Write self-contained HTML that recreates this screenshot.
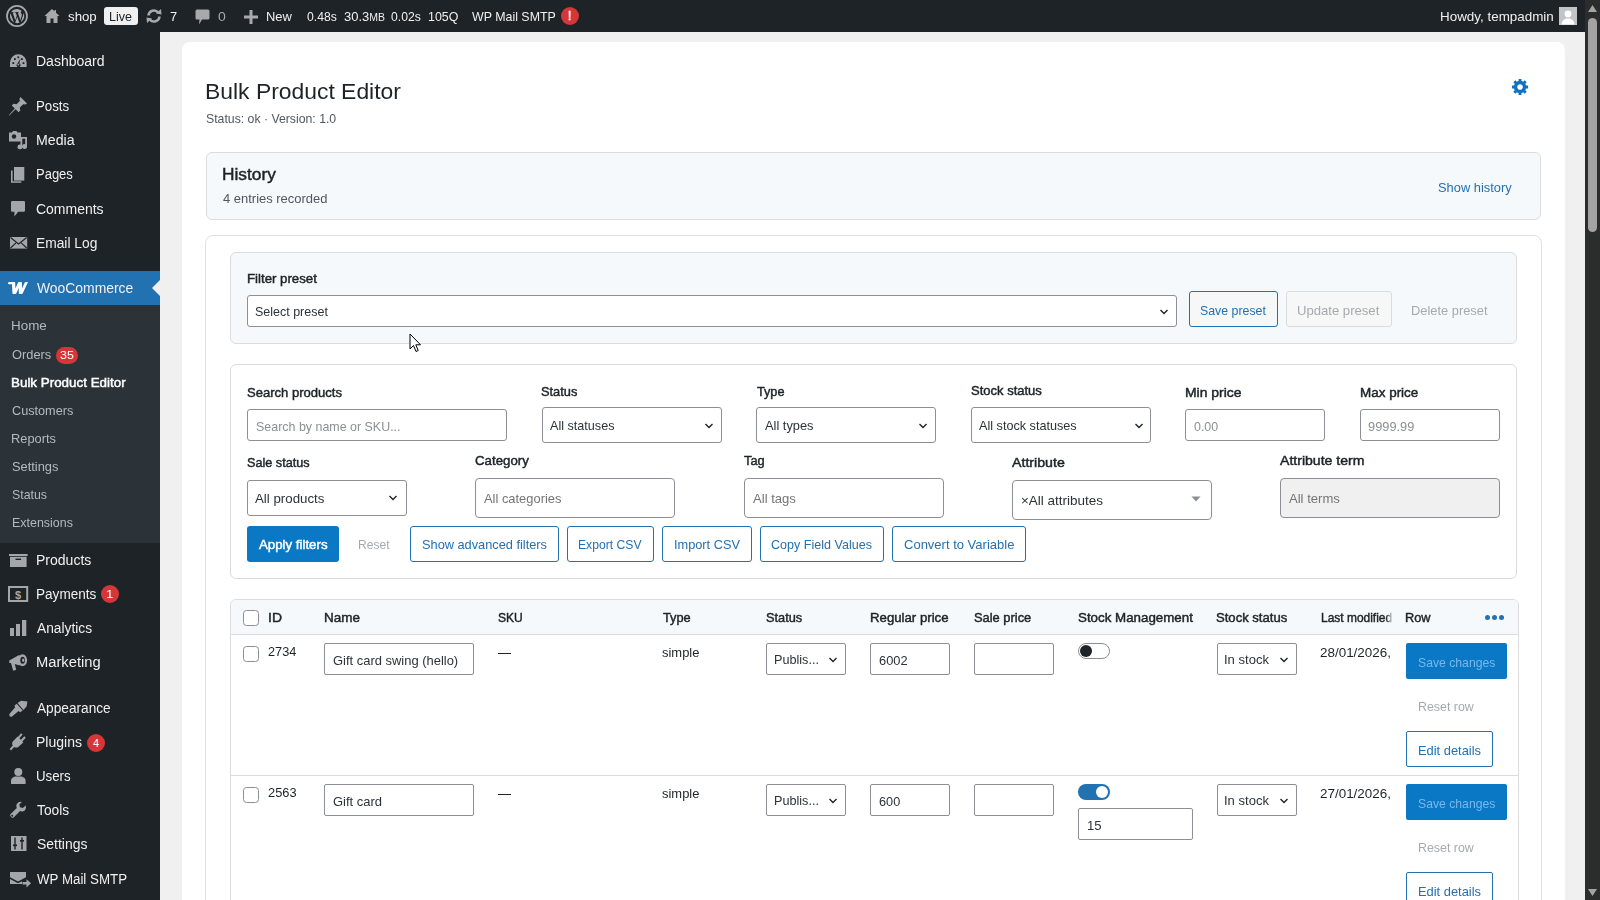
<!DOCTYPE html>
<html><head><meta charset="utf-8"><title>Bulk Product Editor</title>
<style>
html,body{margin:0;padding:0;width:1600px;height:900px;overflow:hidden;background:#f0f0f1;}
body{position:relative;font-family:"Liberation Sans",sans-serif;}
.t{position:absolute;white-space:nowrap;line-height:1;transform-origin:0 0;}
</style></head><body>
<div style="position:absolute;left:160px;top:32px;width:1425px;height:868px;background:#f0f0f1;border-radius:0px;box-sizing:border-box;"></div>
<div style="position:absolute;left:182px;top:42px;width:1383px;height:918px;background:#ffffff;border-radius:8px;box-sizing:border-box;"></div>
<div style="position:absolute;left:0px;top:0px;width:1585px;height:32px;background:#1d2327;border-radius:0px;box-sizing:border-box;"></div>
<svg style="position:absolute;left:6px;top:5px" width="22" height="22" viewBox="0 0 20 20"><circle cx="10" cy="10" r="9.1" fill="none" stroke="#a7aaad" stroke-width="1.6"/><path fill="#a7aaad" d="M3.6 10c0 2.5 1.5 4.7 3.6 5.8L4.1 7.4C3.8 8.2 3.6 9.1 3.6 10zm10.9-.3c0-.8-.3-1.3-.5-1.7-.3-.5-.6-.9-.6-1.4 0-.5.4-1 1-1h.1C13.3 4.5 11.8 3.6 10 3.6c-2.2 0-4.2 1.1-5.3 2.9h.4c.7 0 1.7-.1 1.7-.1.3 0 .4.5 0 .5 0 0-.3 0-.7.1l2.3 6.9 1.4-4.2-1-2.7c-.3 0-.7-.1-.7-.1-.3 0-.3-.5 0-.5 0 0 1.1.1 1.7.1.7 0 1.7-.1 1.7-.1.3 0 .4.5 0 .5 0 0-.3 0-.7.1l2.3 6.8.6-2.1c.4-1 .6-1.7.6-2.3zm-4.3.9l-1.9 5.6c.6.2 1.2.3 1.8.3.7 0 1.4-.1 2.1-.4l-2-5.5zm5.5-3.6c0 .2.1.4.1.7 0 .6-.1 1.4-.5 2.3l-1.9 5.6c1.9-1.1 3.2-3.2 3.2-5.6 0-1.1-.3-2.1-.9-3z"/></svg>
<svg style="position:absolute;left:44px;top:8px" width="16" height="16" viewBox="0 0 16 16"><path fill="#a7aaad" d="M8 1 L0.5 8 L2.5 8 L2.5 15 L6.5 15 L6.5 10.5 L9.5 10.5 L9.5 15 L13.5 15 L13.5 8 L15.5 8 L12 4.7 L12 2 L10.5 2 L10.5 3.3 Z"/></svg>
<div id="t1" class="t" style="left:67.79288025889967px;top:9.99px;font-size:13px;color:#f0f0f1;font-weight:400;transform:scaleX(1.0197);">shop</div>
<div style="position:absolute;left:104px;top:7px;width:34px;height:18px;background:#f0f0f1;border-radius:3px;box-sizing:border-box;"></div>
<div id="t2" class="t" style="left:109.02105862265225px;top:9.99px;font-size:13px;color:#1d2327;font-weight:400;transform:scaleX(0.9639);">Live</div>
<svg style="position:absolute;left:145px;top:8px" width="18" height="16" viewBox="0 0 18 16"><path fill="none" stroke="#a7aaad" stroke-width="2.6" d="M3.5 7.5 A5.5 5.5 0 0 1 13.2 4.5 M14.5 8.5 A5.5 5.5 0 0 1 4.8 11.5"/><path fill="#a7aaad" d="M11 5.5 L16.5 6.5 L16 1 Z M7 10.5 L1.5 9.5 L2 15 Z"/></svg>
<div id="t3" class="t" style="left:170.4px;top:9.99px;font-size:13px;color:#f0f0f1;font-weight:400;transform:scaleX(0.9846);">7</div>
<svg style="position:absolute;left:195px;top:9px" width="15" height="16" viewBox="0 0 15 16"><path fill="#a7aaad" d="M2 0.5 H13 A1.5 1.5 0 0 1 14.5 2 V9 A1.5 1.5 0 0 1 13 10.5 H7 L4 15.5 L4.5 10.5 H2 A1.5 1.5 0 0 1 0.5 9 V2 A1.5 1.5 0 0 1 2 0.5Z"/></svg>
<div id="t4" class="t" style="left:217.5625px;top:9.99px;font-size:13px;color:#a7aaad;font-weight:400;transform:scaleX(1.0769);">0</div>
<svg style="position:absolute;left:244px;top:10px" width="14" height="14" viewBox="0 0 14 14"><path fill="#a7aaad" d="M5.5 0 H8.5 V5.5 H14 V8.5 H8.5 V14 H5.5 V8.5 H0 V5.5 H5.5Z"/></svg>
<div id="t5" class="t" style="left:265.9904088844018px;top:9.99px;font-size:13px;color:#f0f0f1;font-weight:400;transform:scaleX(0.9941);">New</div>
<div id="t6" class="t" style="left:307.1198279393691px;top:9.99px;font-size:13px;color:#f0f0f1;font-weight:400;transform:scaleX(0.9358);">0.48s</div>
<div id="t7" class="t" style="left:343.5007898894155px;top:9.99px;font-size:13px;color:#f0f0f1;font-weight:400;transform:scaleX(0.9984);">30.3<span style="font-size:10.5px">MB</span></div>
<div id="t8" class="t" style="left:390.6198279393691px;top:9.99px;font-size:13px;color:#f0f0f1;font-weight:400;transform:scaleX(0.9358);">0.02s</div>
<div id="t9" class="t" style="left:427.72553724181097px;top:9.99px;font-size:13px;color:#f0f0f1;font-weight:400;transform:scaleX(0.9532);">105Q</div>
<div id="t10" class="t" style="left:472.0px;top:9.99px;font-size:13px;color:#f0f0f1;font-weight:400;transform:scaleX(0.9536);">WP Mail SMTP</div>
<div style="position:absolute;left:561px;top:7px;width:18px;height:18px;background:#d63638;border-radius:9px;box-sizing:border-box;"></div>
<div id="t11" class="t" style="left:568px;top:10.34px;font-size:12px;color:#ffffff;font-weight:400;-webkit-text-stroke:0.45px #ffffff;">!</div>
<div id="t12" class="t" style="left:1439.9521693369197px;top:9.99px;font-size:13px;color:#f0f0f1;font-weight:400;transform:scaleX(1.0317);">Howdy, tempadmin</div>
<div style="position:absolute;left:1559px;top:7px;width:18px;height:18px;background:#c3c4c7;border-radius:0px;box-sizing:border-box;"></div>
<svg style="position:absolute;left:1559px;top:7px" width="18" height="18" viewBox="0 0 18 18"><circle cx="9" cy="7" r="3.4" fill="#fff"/><path fill="#fff" d="M2.5 17.5 C3 13 6 11.5 9 11.5 C12 11.5 15 13 15.5 17.5Z"/></svg>
<div style="position:absolute;left:0px;top:32px;width:160px;height:868px;background:#1d2327;border-radius:0px;box-sizing:border-box;"></div>
<div style="position:absolute;left:0px;top:271px;width:160px;height:34px;background:#2271b1;border-radius:0px;box-sizing:border-box;"></div>
<div style="position:absolute;left:0px;top:305px;width:160px;height:238px;background:#2c3338;border-radius:0px;box-sizing:border-box;"></div>
<svg style="position:absolute;left:152px;top:280px" width="8" height="16" viewBox="0 0 8 16"><path fill="#f0f0f1" d="M8 0 L0 8 L8 16Z"/></svg>
<svg style="position:absolute;left:9px;top:53px" width="19" height="15" viewBox="0 0 19 15"><path fill="#a3a7ab" d="M1 14 V9.5 A8.3 8.3 0 0 1 17.6 9.5 V14 Z"/><rect x="3.4" y="9.2" width="1.8" height="1.8" fill="#1d2327"/><rect x="5" y="5.2" width="1.8" height="1.8" fill="#1d2327"/><rect x="8.4" y="3.4" width="1.8" height="1.8" fill="#1d2327"/><rect x="12" y="5.2" width="1.8" height="1.8" fill="#1d2327"/><rect x="13.6" y="9.2" width="1.8" height="1.8" fill="#1d2327"/><path fill="#1d2327" d="M11.6 5.5 L10.3 10.5 A1.9 1.9 0 1 1 8.3 10.8 Z"/><circle cx="9.3" cy="11.6" r="0.9" fill="#a3a7ab"/></svg>
<svg style="position:absolute;left:8px;top:96px" width="20" height="20" viewBox="0 0 20 20"><path fill="#a3a7ab" d="M12.5 1 L19 7.5 L17.3 8.6 L15.2 8.2 L11.8 11.6 L12.3 14.6 L10.6 16.3 L7.6 13.3 L1.3 19.6 L0.8 19.2 L6.8 12.5 L3.8 9.5 L5.5 7.8 L8.5 8.3 L11.9 4.9 L11.5 2.8 Z"/></svg>
<svg style="position:absolute;left:8px;top:130px" width="20" height="20" viewBox="0 0 20 20"><path fill="#a3a7ab" d="M1 2.5 H4 L5 1 H8.5 L9.5 2.5 H13 V11.5 H1 Z"/><circle cx="6" cy="6.5" r="2.2" fill="#1d2327"/><path fill="#a3a7ab" d="M12.5 7 H19 V16.3 A2.4 2.4 0 1 1 17.2 14.2 V8.8 H14.3 V16.8 A2.4 2.4 0 1 1 12.5 14.6 Z"/></svg>
<svg style="position:absolute;left:10px;top:166px" width="16" height="18" viewBox="0 0 16 18"><rect x="4" y="1" width="10.3" height="13.6" fill="#a3a7ab"/><path fill="#a3a7ab" d="M1 4.5 H2.6 V15.2 H11.3 V16.8 H1 Z"/></svg>
<svg style="position:absolute;left:10px;top:200px" width="16" height="18" viewBox="0 0 16 18"><path fill="#a3a7ab" d="M2.2 1 H13.8 A1.2 1.2 0 0 1 15 2.2 V10.5 A1.2 1.2 0 0 1 13.8 11.7 H8.2 L4.4 16.5 V11.7 H2.2 A1.2 1.2 0 0 1 1 10.5 V2.2 A1.2 1.2 0 0 1 2.2 1Z"/></svg>
<svg style="position:absolute;left:9px;top:236px" width="20" height="14" viewBox="0 0 20 14"><rect x="1" y="1" width="17.2" height="11.6" fill="#a3a7ab"/><path fill="none" stroke="#1d2327" stroke-width="1.1" d="M1.5 1.5 L9.6 8 L17.7 1.5 M1.5 12 L7 6.8 M17.7 12 L12.2 6.8"/></svg>
<svg style="position:absolute;left:7px;top:281px" width="22" height="14" viewBox="0 0 22 14"><path fill="#ffffff" d="M1 2.2 C1 1.2 1.8 1 3.5 1 H7 C8 1 8.2 1.5 8.2 2.4 L8.4 7.5 L10.6 2.5 C11 1.4 11.6 1 12.6 1 H14 C14.8 1 15 1.6 15 2.4 V7.5 L17.5 2 C17.9 1.2 18.5 1 19.6 1 H21 L16 11.8 C15.6 12.7 15 13 14.2 13 H13 C12.2 13 11.8 12.5 11.8 11.5 V7 L9.5 12 C9.1 12.8 8.6 13 7.8 13 H6.6 C5.8 13 5.4 12.5 5.4 11.7 L5 3.2 H2.6 C1.6 3.2 1 2.9 1 2.2Z"/></svg>
<svg style="position:absolute;left:8px;top:553px" width="20" height="16" viewBox="0 0 20 16"><rect x="1" y="1" width="18.6" height="2" fill="#a3a7ab"/><path fill="#a3a7ab" d="M2 3.8 H18.6 V14 H2 Z"/><rect x="7.5" y="5.6" width="5.6" height="1.4" fill="#1d2327"/></svg>
<svg style="position:absolute;left:7px;top:585px" width="22" height="18" viewBox="0 0 22 18"><rect x="2" y="2" width="18.2" height="14" fill="none" stroke="#a3a7ab" stroke-width="2"/><text x="11.1" y="13.6" font-family="Liberation Sans" font-weight="700" font-size="11" fill="#a3a7ab" text-anchor="middle">$</text></svg>
<svg style="position:absolute;left:9px;top:619px" width="18" height="18" viewBox="0 0 18 18"><rect x="1" y="9" width="4" height="8" fill="#a3a7ab"/><rect x="7" y="5" width="4" height="12" fill="#a3a7ab"/><rect x="13" y="1" width="4.3" height="16" fill="#a3a7ab"/></svg>
<svg style="position:absolute;left:8px;top:652px" width="20" height="20" viewBox="0 0 20 20"><path fill="#a3a7ab" d="M1.3 8.5 L11.5 2.8 V13.5 L6.8 12 L8.2 17.8 L5.2 18.8 L3 11 H1.3 Z"/><ellipse cx="14.5" cy="8.2" rx="4.6" ry="6" fill="#a3a7ab"/><ellipse cx="14.6" cy="8.2" rx="2.3" ry="3.5" fill="#1d2327"/><ellipse cx="15.2" cy="8.2" rx="1.1" ry="1.8" fill="#a3a7ab"/></svg>
<svg style="position:absolute;left:8px;top:700px" width="20" height="18" viewBox="0 0 20 18"><path fill="#a3a7ab" d="M9.5 3 L13 0.8 L19.5 1.5 L18.5 6.5 L15.5 10 Z"/><path fill="#a3a7ab" d="M8.7 3.8 L14.7 10.6 L12.2 12.2 L10.6 11 L4 16.6 A2 2 0 0 1 1.4 14 L7 7.4 L6.6 5.6 Z"/></svg>
<svg style="position:absolute;left:9px;top:732px" width="18" height="19" viewBox="0 0 18 19"><path fill="#a3a7ab" d="M12 1.2 L13.6 2.6 L10.4 6.3 L12 7.8 L15.3 4.2 L16.8 5.7 L13.4 9.4 L14.3 10.5 L9 15.2 C7.6 15.8 6.3 15.7 5.2 15 L2 18.4 L0.6 17 L3.8 13.6 C3 12.4 3 11 3.6 9.7 L8.6 4.6 L9 5 Z"/></svg>
<svg style="position:absolute;left:10px;top:767px" width="17" height="18" viewBox="0 0 17 18"><circle cx="8.3" cy="5" r="4" fill="#a3a7ab"/><path fill="#a3a7ab" d="M1 17 V14 C1 11.3 3.5 9.6 6 9.6 H10.6 C13.1 9.6 15.6 11.3 15.6 14 V17 Z"/></svg>
<svg style="position:absolute;left:9px;top:801px" width="18" height="18" viewBox="0 0 18 18"><path fill="#a3a7ab" d="M16.6 4.6 L13.8 7 L11 6.3 L10.3 3.5 L12.8 0.9 C10.6 0.3 8.3 1.4 7.6 3.6 C7.2 4.7 7.3 5.9 7.8 6.9 L1.7 13 C1 13.7 1 14.9 1.7 15.6 L2.3 16.2 C3 16.9 4.2 16.9 4.9 16.2 L11 10.1 C12 10.6 13.2 10.7 14.3 10.3 C16.5 9.6 17.6 7.2 16.6 4.6 Z"/><circle cx="3.2" cy="14.7" r="1" fill="#1d2327"/></svg>
<svg style="position:absolute;left:10px;top:835px" width="17" height="17" viewBox="0 0 17 17"><rect x="1" y="1" width="15.5" height="15" fill="#a3a7ab"/><path fill="none" stroke="#1d2327" stroke-width="1.4" d="M5 2.5 V14.5 M12 2.5 V14.5"/><rect x="3" y="9.5" width="4" height="1.6" fill="#1d2327"/><rect x="10" y="5" width="4" height="1.6" fill="#1d2327"/></svg>
<svg style="position:absolute;left:9px;top:871px" width="23" height="18" viewBox="0 0 23 18"><path fill="#a3a7ab" d="M1 1 H17 V6.2 L9 10.5 L1 6.2 Z"/><path fill="#a3a7ab" d="M1 8 L9 12.3 L13 10.2 V13 H1 Z"/><path fill="#a3a7ab" d="M13.5 11 H17.5 V8.2 L22 12.3 L17.5 16.4 V13.6 H13.5 Z"/></svg>
<div id="t13" class="t" style="left:35.904761904761905px;top:54.14px;font-size:14px;color:#f0f0f1;font-weight:400;transform:scaleX(1.0014);">Dashboard</div>
<div id="t14" class="t" style="left:35.9644752960392px;top:98.74px;font-size:14px;color:#f0f0f1;font-weight:400;transform:scaleX(0.9468);">Posts</div>
<div id="t15" class="t" style="left:35.892285030381146px;top:132.74px;font-size:14px;color:#f0f0f1;font-weight:400;transform:scaleX(1.0128);">Media</div>
<div id="t16" class="t" style="left:35.985491671144544px;top:167.34px;font-size:14px;color:#f0f0f1;font-weight:400;transform:scaleX(0.9276);">Pages</div>
<div id="t17" class="t" style="left:36.34462580843856px;top:202.04px;font-size:14px;color:#f0f0f1;font-weight:400;transform:scaleX(0.9987);">Comments</div>
<div id="t18" class="t" style="left:35.92210144927536px;top:235.94px;font-size:14px;color:#f0f0f1;font-weight:400;transform:scaleX(0.9855);">Email Log</div>
<div id="t19" class="t" style="left:37.0px;top:281.14px;font-size:14px;color:#f0f0f1;font-weight:400;transform:scaleX(0.9925);">WooCommerce</div>
<div id="t20" class="t" style="left:35.904555866632734px;top:552.84px;font-size:14px;color:#f0f0f1;font-weight:400;transform:scaleX(1.0015);">Products</div>
<div id="t21" class="t" style="left:35.93897770772349px;top:586.94px;font-size:14px;color:#f0f0f1;font-weight:400;transform:scaleX(0.9701);">Payments</div>
<div id="t22" class="t" style="left:37.0px;top:620.94px;font-size:14px;color:#f0f0f1;font-weight:400;transform:scaleX(0.9823);">Analytics</div>
<div id="t23" class="t" style="left:35.84914534817024px;top:654.64px;font-size:14px;color:#f0f0f1;font-weight:400;transform:scaleX(1.0522);">Marketing</div>
<div id="t24" class="t" style="left:37.0px;top:701.14px;font-size:14px;color:#f0f0f1;font-weight:400;transform:scaleX(0.9755);">Appearance</div>
<div id="t25" class="t" style="left:35.90589866009549px;top:734.84px;font-size:14px;color:#f0f0f1;font-weight:400;transform:scaleX(1.0003);">Plugins</div>
<div id="t26" class="t" style="left:36.17083010085337px;top:768.94px;font-size:14px;color:#f0f0f1;font-weight:400;transform:scaleX(0.9476);">Users</div>
<div id="t27" class="t" style="left:36.78484525080043px;top:802.94px;font-size:14px;color:#f0f0f1;font-weight:400;transform:scaleX(0.9836);">Tools</div>
<div id="t28" class="t" style="left:36.56435643564357px;top:836.94px;font-size:14px;color:#f0f0f1;font-weight:400;transform:scaleX(0.9958);">Settings</div>
<div id="t29" class="t" style="left:37.0px;top:871.94px;font-size:14px;color:#f0f0f1;font-weight:400;transform:scaleX(0.9512);">WP Mail SMTP</div>
<div id="t30" class="t" style="left:11.451724137931034px;top:318.99px;font-size:13px;color:#b4b9be;font-weight:400;transform:scaleX(1.0321);">Home</div>
<div id="t31" class="t" style="left:11.898721101819971px;top:347.79px;font-size:13px;color:#b4b9be;font-weight:400;transform:scaleX(0.9867);">Orders</div>
<div id="t32" class="t" style="left:11.905728364644286px;top:403.79px;font-size:13px;color:#b4b9be;font-weight:400;transform:scaleX(0.9752);">Customers</div>
<div id="t33" class="t" style="left:11.498128688642579px;top:431.79px;font-size:13px;color:#b4b9be;font-weight:400;transform:scaleX(0.9865);">Reports</div>
<div id="t34" class="t" style="left:12.0986798679868px;top:459.79px;font-size:13px;color:#b4b9be;font-weight:400;transform:scaleX(0.9879);">Settings</div>
<div id="t35" class="t" style="left:12.114512152166256px;top:487.79px;font-size:13px;color:#b4b9be;font-weight:400;transform:scaleX(0.9489);">Status</div>
<div id="t36" class="t" style="left:11.527976312027771px;top:515.99px;font-size:13px;color:#b4b9be;font-weight:400;transform:scaleX(0.9571);">Extensions</div>
<div id="t37" class="t" style="left:11.453917050691244px;top:375.79px;font-size:13px;color:#ffffff;font-weight:400;-webkit-text-stroke:0.45px #ffffff;transform:scaleX(1.0300);">Bulk Product Editor</div>
<div style="position:absolute;left:56px;top:346.5px;width:22px;height:17.5px;background:#d63638;border-radius:9px;box-sizing:border-box;"></div>
<div id="t38" class="t" style="left:60.10957297043642px;top:350.18px;font-size:11px;color:#fff;font-weight:400;transform:scaleX(1.1358);">35</div>
<div style="position:absolute;left:101px;top:585px;width:18px;height:18px;background:#d63638;border-radius:9px;box-sizing:border-box;"></div>
<div id="t39" class="t" style="left:106.17241379310344px;top:589.18px;font-size:11px;color:#fff;font-weight:400;transform:scaleX(1.2038);">1</div>
<div style="position:absolute;left:87px;top:734px;width:18px;height:18px;background:#d63638;border-radius:9px;box-sizing:border-box;"></div>
<div id="t40" class="t" style="left:93px;top:737.68px;font-size:11px;color:#fff;font-weight:400;">4</div>
<div id="t41" class="t" style="left:205.21198156682027px;top:80.64px;font-size:22.5px;color:#1d2327;font-weight:400;transform:scaleX(1.0172);">Bulk Product Editor</div>
<div id="t42" class="t" style="left:206.1167930460514px;top:112.39px;font-size:13px;color:#50575e;font-weight:400;transform:scaleX(0.9433);">Status: ok &middot; Version: 1.0</div>
<svg style="position:absolute;left:1511px;top:77px" width="19" height="19" viewBox="0 0 20 20"><path fill="#0f72c0" d="M18 12h-2.18c-.17.7-.44 1.35-.81 1.93l1.54 1.54-2.1 2.1-1.54-1.54c-.58.36-1.23.63-1.91.79V19H8v-2.18c-.68-.16-1.33-.43-1.91-.79l-1.54 1.54-2.12-2.12 1.54-1.54c-.36-.58-.63-1.23-.79-1.91H1V9.03h2.17c.16-.7.44-1.35.8-1.94L2.43 5.55l2.1-2.1 1.54 1.54c.58-.37 1.24-.64 1.93-.81V2h3v2.18c.68.16 1.33.43 1.91.79l1.54-1.54 2.12 2.12-1.54 1.54c.36.59.64 1.24.8 1.94H18V12zm-8.5 1.5c1.66 0 3-1.34 3-3s-1.34-3-3-3-3 1.34-3 3 1.34 3 3 3z"/></svg>
<div style="position:absolute;left:206px;top:152px;width:1335px;height:68px;background:#f6f9fc;border:1px solid #dcdcde;border-radius:6px;box-sizing:border-box;"></div>
<div id="t43" class="t" style="left:222.1477784932389px;top:167.45px;font-size:16px;color:#1d2327;font-weight:400;-webkit-text-stroke:0.45px #1d2327;transform:scaleX(1.0818);">History</div>
<div id="t44" class="t" style="left:222.79755501222493px;top:191.79px;font-size:13px;color:#50575e;font-weight:400;transform:scaleX(0.9967);">4 entries recorded</div>
<div id="t45" class="t" style="left:1438.3479416809605px;top:181.49px;font-size:13px;color:#2271b1;font-weight:400;transform:scaleX(0.9897);">Show history</div>
<div style="position:absolute;left:205px;top:235px;width:1337px;height:725px;background:#ffffff;border:1px solid #e0e0e0;border-radius:8px;box-sizing:border-box;"></div>
<div style="position:absolute;left:230px;top:252px;width:1287px;height:92px;background:#f6f9fc;border:1px solid #dcdcde;border-radius:6px;box-sizing:border-box;"></div>
<div id="t46" class="t" style="left:246.66575663758326px;top:271.79px;font-size:13px;color:#1d2327;font-weight:400;-webkit-text-stroke:0.45px #1d2327;transform:scaleX(1.0183);">Filter preset</div>
<div style="position:absolute;left:247px;top:295px;width:930px;height:32px;background:#ffffff;border:1px solid #8c8f94;border-radius:3px;box-sizing:border-box;"></div>
<div id="t47" class="t" style="left:254.80995292535306px;top:304.89px;font-size:13px;color:#2c3338;font-weight:400;transform:scaleX(0.9601);">Select preset</div>
<svg style="position:absolute;left:1159px;top:307.5px" width="10" height="8" viewBox="0 0 10 8"><path fill="none" stroke="#1d2327" stroke-width="1.4" d="M1.5 2 L5 5.5 L8.5 2"/></svg>
<div style="position:absolute;left:1189px;top:291px;width:89px;height:36px;background:#f6f7f7;border:1px solid #2271b1;border-radius:3px;box-sizing:border-box;"></div>
<div id="t48" class="t" style="left:1200.1144223693893px;top:303.99px;font-size:13px;color:#2271b1;font-weight:400;transform:scaleX(0.9491);">Save preset</div>
<div style="position:absolute;left:1286px;top:291px;width:106px;height:36px;background:#f6f7f7;border:1px solid #dcdcde;border-radius:3px;box-sizing:border-box;"></div>
<div id="t49" class="t" style="left:1297.1814187068424px;top:303.99px;font-size:13px;color:#a7aaad;font-weight:400;transform:scaleX(1.0075);">Update preset</div>
<div id="t50" class="t" style="left:1410.99567675424px;top:303.99px;font-size:13px;color:#a7aaad;font-weight:400;transform:scaleX(0.9889);">Delete preset</div>
<div style="position:absolute;left:230px;top:364px;width:1287px;height:215px;background:#ffffff;border:1px solid #dcdcde;border-radius:6px;box-sizing:border-box;"></div>
<div id="t51" class="t" style="left:246.99223537368957px;top:385.99px;font-size:13px;color:#1d2327;font-weight:400;-webkit-text-stroke:0.45px #1d2327;transform:scaleX(1.0037);">Search products</div>
<div style="position:absolute;left:247px;top:409px;width:260px;height:32px;background:#ffffff;border:1px solid #8c8f94;border-radius:3px;box-sizing:border-box;"></div>
<div id="t52" class="t" style="left:255.61123146850176px;top:419.99px;font-size:13px;color:#8c8f94;font-weight:400;transform:scaleX(0.9570);">Search by name or SKU...</div>
<div id="t53" class="t" style="left:541.3998591053187px;top:384.59px;font-size:13px;color:#1d2327;font-weight:400;-webkit-text-stroke:0.45px #1d2327;transform:scaleX(0.9850);">Status</div>
<div style="position:absolute;left:542px;top:407px;width:180px;height:36px;background:#ffffff;border:1px solid #8c8f94;border-radius:3px;box-sizing:border-box;"></div>
<div id="t54" class="t" style="left:549.8px;top:418.99px;font-size:13px;color:#2c3338;font-weight:400;transform:scaleX(0.9702);">All statuses</div>
<svg style="position:absolute;left:704px;top:421.5px" width="10" height="8" viewBox="0 0 10 8"><path fill="none" stroke="#1d2327" stroke-width="1.4" d="M1.5 2 L5 5.5 L8.5 2"/></svg>
<div id="t55" class="t" style="left:756.702450867052px;top:384.59px;font-size:13px;color:#1d2327;font-weight:400;-webkit-text-stroke:0.45px #1d2327;transform:scaleX(0.9725);">Type</div>
<div style="position:absolute;left:756px;top:407px;width:180px;height:36px;background:#ffffff;border:1px solid #8c8f94;border-radius:3px;box-sizing:border-box;"></div>
<div id="t56" class="t" style="left:764.6px;top:418.99px;font-size:13px;color:#2c3338;font-weight:400;transform:scaleX(0.9872);">All types</div>
<svg style="position:absolute;left:917.5px;top:421.5px" width="10" height="8" viewBox="0 0 10 8"><path fill="none" stroke="#1d2327" stroke-width="1.4" d="M1.5 2 L5 5.5 L8.5 2"/></svg>
<div id="t57" class="t" style="left:970.7937244944228px;top:384.29px;font-size:13px;color:#1d2327;font-weight:400;-webkit-text-stroke:0.45px #1d2327;transform:scaleX(1.0001);">Stock status</div>
<div style="position:absolute;left:971px;top:407px;width:180px;height:36px;background:#ffffff;border:1px solid #8c8f94;border-radius:3px;box-sizing:border-box;"></div>
<div id="t58" class="t" style="left:979.3px;top:418.99px;font-size:13px;color:#2c3338;font-weight:400;transform:scaleX(0.9728);">All stock statuses</div>
<svg style="position:absolute;left:1133.5px;top:421.5px" width="10" height="8" viewBox="0 0 10 8"><path fill="none" stroke="#1d2327" stroke-width="1.4" d="M1.5 2 L5 5.5 L8.5 2"/></svg>
<div id="t59" class="t" style="left:1184.710849349039px;top:385.99px;font-size:13px;color:#1d2327;font-weight:400;-webkit-text-stroke:0.45px #1d2327;transform:scaleX(1.0724);">Min price</div>
<div style="position:absolute;left:1185px;top:409px;width:140px;height:32px;background:#ffffff;border:1px solid #8c8f94;border-radius:3px;box-sizing:border-box;"></div>
<div id="t60" class="t" style="left:1194.1114699044174px;top:420.84px;font-size:12px;color:#8c8f94;font-weight:400;transform:scaleX(1.0361);">0.00</div>
<div id="t61" class="t" style="left:1359.7492703266157px;top:385.99px;font-size:13px;color:#1d2327;font-weight:400;-webkit-text-stroke:0.45px #1d2327;transform:scaleX(1.0346);">Max price</div>
<div style="position:absolute;left:1360px;top:409px;width:140px;height:32px;background:#ffffff;border:1px solid #8c8f94;border-radius:3px;box-sizing:border-box;"></div>
<div id="t62" class="t" style="left:1368.1993355481727px;top:420.84px;font-size:12px;color:#8c8f94;font-weight:400;transform:scaleX(1.0678);">9999.99</div>
<div id="t63" class="t" style="left:246.80463814474209px;top:456.29px;font-size:13px;color:#1d2327;font-weight:400;-webkit-text-stroke:0.45px #1d2327;transform:scaleX(0.9732);">Sale status</div>
<div style="position:absolute;left:247px;top:480px;width:160px;height:36px;background:#ffffff;border:1px solid #8c8f94;border-radius:3px;box-sizing:border-box;"></div>
<div id="t64" class="t" style="left:255.0px;top:491.99px;font-size:13px;color:#2c3338;font-weight:400;transform:scaleX(1.0220);">All products</div>
<svg style="position:absolute;left:388px;top:494px" width="10" height="8" viewBox="0 0 10 8"><path fill="none" stroke="#1d2327" stroke-width="1.4" d="M1.5 2 L5 5.5 L8.5 2"/></svg>
<div id="t65" class="t" style="left:475.1782322863404px;top:453.99px;font-size:13px;color:#1d2327;font-weight:400;-webkit-text-stroke:0.45px #1d2327;transform:scaleX(1.0203);">Category</div>
<div style="position:absolute;left:475px;top:478px;width:200px;height:40px;background:#ffffff;border:1px solid #8c8f94;border-radius:4px;box-sizing:border-box;"></div>
<div id="t66" class="t" style="left:484.4px;top:491.99px;font-size:13px;color:#757575;font-weight:400;transform:scaleX(0.9919);">All categories</div>
<div id="t67" class="t" style="left:743.7996830427892px;top:453.99px;font-size:13px;color:#1d2327;font-weight:400;-webkit-text-stroke:0.45px #1d2327;transform:scaleX(0.9862);">Tag</div>
<div style="position:absolute;left:744px;top:478px;width:200px;height:40px;background:#ffffff;border:1px solid #8c8f94;border-radius:4px;box-sizing:border-box;"></div>
<div id="t68" class="t" style="left:752.5px;top:491.99px;font-size:13px;color:#757575;font-weight:400;transform:scaleX(1.0065);">All tags</div>
<div id="t69" class="t" style="left:1012.2px;top:455.99px;font-size:13px;color:#1d2327;font-weight:400;-webkit-text-stroke:0.45px #1d2327;transform:scaleX(1.0901);">Attribute</div>
<div style="position:absolute;left:1012px;top:480px;width:200px;height:40px;background:#ffffff;border:1px solid #8c8f94;border-radius:4px;box-sizing:border-box;"></div>
<div id="t70" class="t" style="left:1021.1573046524892px;top:493.69px;font-size:13px;color:#2c3338;font-weight:400;transform:scaleX(1.0372);">&times;All attributes</div>
<svg style="position:absolute;left:1191px;top:496px" width="10" height="6" viewBox="0 0 10 6"><path fill="#8c8f94" d="M0.5 0.5 H9.5 L5 5.5Z"/></svg>
<div id="t71" class="t" style="left:1280.3px;top:453.99px;font-size:13px;color:#1d2327;font-weight:400;-webkit-text-stroke:0.45px #1d2327;transform:scaleX(1.0821);">Attribute term</div>
<div style="position:absolute;left:1280px;top:478px;width:220px;height:40px;background:#f0f0f1;border:1px solid #8c8f94;border-radius:4px;box-sizing:border-box;"></div>
<div id="t72" class="t" style="left:1289.3px;top:491.79px;font-size:13px;color:#757575;font-weight:400;transform:scaleX(1.0049);">All terms</div>
<div style="position:absolute;left:247px;top:526px;width:92px;height:36px;background:#0a78c4;border-radius:3px;box-sizing:border-box;"></div>
<div id="t73" class="t" style="left:258.9px;top:538.39px;font-size:13px;color:#ffffff;font-weight:400;-webkit-text-stroke:0.45px #ffffff;transform:scaleX(1.0197);">Apply filters</div>
<div id="t74" class="t" style="left:358.45483933038287px;top:538.39px;font-size:13px;color:#a7aaad;font-weight:400;transform:scaleX(0.9306);">Reset</div>
<div style="position:absolute;left:410px;top:526px;width:149px;height:36px;background:#ffffff;border:1px solid #2271b1;border-radius:3px;box-sizing:border-box;"></div>
<div id="t75" class="t" style="left:422.0007233273056px;top:537.99px;font-size:13px;color:#2271b1;font-weight:400;transform:scaleX(0.9828);">Show advanced filters</div>
<div style="position:absolute;left:567px;top:526px;width:87px;height:36px;background:#ffffff;border:1px solid #2271b1;border-radius:3px;box-sizing:border-box;"></div>
<div id="t76" class="t" style="left:578.4505261162195px;top:537.99px;font-size:13px;color:#2271b1;font-weight:400;transform:scaleX(0.9349);">Export CSV</div>
<div style="position:absolute;left:662px;top:526px;width:90px;height:36px;background:#ffffff;border:1px solid #2271b1;border-radius:3px;box-sizing:border-box;"></div>
<div id="t77" class="t" style="left:673.5032585777267px;top:537.99px;font-size:13px;color:#2271b1;font-weight:400;transform:scaleX(0.9814);">Import CSV</div>
<div style="position:absolute;left:760px;top:526px;width:124px;height:36px;background:#ffffff;border:1px solid #2271b1;border-radius:3px;box-sizing:border-box;"></div>
<div id="t78" class="t" style="left:771.411331861663px;top:537.99px;font-size:13px;color:#2271b1;font-weight:400;transform:scaleX(0.9660);">Copy Field Values</div>
<div style="position:absolute;left:892px;top:526px;width:134px;height:36px;background:#ffffff;border:1px solid #2271b1;border-radius:3px;box-sizing:border-box;"></div>
<div id="t79" class="t" style="left:903.8902325581396px;top:537.99px;font-size:13px;color:#2271b1;font-weight:400;transform:scaleX(1.0006);">Convert to Variable</div>
<div style="position:absolute;left:230px;top:599px;width:1289px;height:361px;background:#ffffff;border:1px solid #dcdcde;border-radius:6px;box-sizing:border-box;"></div>
<div style="position:absolute;left:231px;top:600px;width:1287px;height:34px;background:#f6f9fc;border-radius:0px;box-sizing:border-box;border-radius:5px 5px 0 0;"></div>
<div style="position:absolute;left:231px;top:634px;width:1287px;height:1px;background:#dcdcde;border-radius:0px;box-sizing:border-box;"></div>
<div style="position:absolute;left:243px;top:610px;width:16px;height:16px;background:#ffffff;border:1px solid #8c8f94;border-radius:3.5px;box-sizing:border-box;"></div>
<div id="t80" class="t" style="left:267.5080902586682px;top:610.99px;font-size:13px;color:#1d2327;font-weight:400;-webkit-text-stroke:0.45px #1d2327;transform:scaleX(1.0751);">ID</div>
<div id="t81" class="t" style="left:323.5455938697318px;top:610.99px;font-size:13px;color:#1d2327;font-weight:400;-webkit-text-stroke:0.45px #1d2327;transform:scaleX(1.0382);">Name</div>
<div id="t82" class="t" style="left:497.6235294117647px;top:610.99px;font-size:13px;color:#1d2327;font-weight:400;-webkit-text-stroke:0.45px #1d2327;transform:scaleX(0.9267);">SKU</div>
<div id="t83" class="t" style="left:662.8002312138728px;top:610.99px;font-size:13px;color:#1d2327;font-weight:400;-webkit-text-stroke:0.45px #1d2327;transform:scaleX(0.9835);">Type</div>
<div id="t84" class="t" style="left:766.4009862627686px;top:610.99px;font-size:13px;color:#1d2327;font-weight:400;-webkit-text-stroke:0.45px #1d2327;transform:scaleX(0.9822);">Status</div>
<div id="t85" class="t" style="left:869.9679148864874px;top:610.99px;font-size:13px;color:#1d2327;font-weight:400;-webkit-text-stroke:0.45px #1d2327;transform:scaleX(1.0162);">Regular price</div>
<div id="t86" class="t" style="left:974.2978571428572px;top:610.99px;font-size:13px;color:#1d2327;font-weight:400;-webkit-text-stroke:0.45px #1d2327;transform:scaleX(0.9899);">Sale price</div>
<div id="t87" class="t" style="left:1077.9833522856493px;top:610.99px;font-size:13px;color:#1d2327;font-weight:400;-webkit-text-stroke:0.45px #1d2327;transform:scaleX(1.0256);">Stock Management</div>
<div id="t88" class="t" style="left:1216.4914029201052px;top:610.99px;font-size:13px;color:#1d2327;font-weight:400;-webkit-text-stroke:0.45px #1d2327;transform:scaleX(1.0058);">Stock status</div>
<div id="t89" class="t" style="left:1405.202523977789px;top:610.99px;font-size:13px;color:#1d2327;font-weight:400;-webkit-text-stroke:0.45px #1d2327;transform:scaleX(0.9821);">Row</div>
<div style="position:absolute;left:1320px;top:610px;width:73.5px;height:18px;overflow:hidden;-webkit-mask-image:linear-gradient(90deg,#000 66px,transparent 73.5px)">
<div id="t90" class="t" style="left:0.5px;top:0.99px;font-size:13px;color:#1d2327;font-weight:400;-webkit-text-stroke:0.45px #1d2327;"><span style="display:inline-block;transform:scaleX(0.92);transform-origin:0 0">Last modified</span></div>
</div>
<div style="position:absolute;left:1485.2px;top:615.3px;width:4.599999999999909px;height:4.600000000000023px;background:#2271b1;border-radius:3px;box-sizing:border-box;"></div>
<div style="position:absolute;left:1492.2px;top:615.3px;width:4.599999999999909px;height:4.600000000000023px;background:#2271b1;border-radius:3px;box-sizing:border-box;"></div>
<div style="position:absolute;left:1499.2px;top:615.3px;width:4.599999999999909px;height:4.600000000000023px;background:#2271b1;border-radius:3px;box-sizing:border-box;"></div>
<div style="position:absolute;left:243px;top:646px;width:16px;height:16px;background:#ffffff;border:1px solid #8c8f94;border-radius:3.5px;box-sizing:border-box;"></div>
<div id="t91" class="t" style="left:268.00340213200275px;top:645.49px;font-size:13px;color:#1d2327;font-weight:400;transform:scaleX(0.9790);">2734</div>
<div style="position:absolute;left:324px;top:643px;width:150px;height:32px;background:#ffffff;border:1px solid #8c8f94;border-radius:2px;box-sizing:border-box;"></div>
<div id="t92" class="t" style="left:332.893204775023px;top:653.99px;font-size:13px;color:#2c3338;font-weight:400;transform:scaleX(0.9958);">Gift card swing (hello)</div>
<div style="position:absolute;left:498px;top:653px;width:13px;height:1.2999999999999545px;background:#1d2327;border-radius:0px;box-sizing:border-box;"></div>
<div id="t93" class="t" style="left:662.3976219196967px;top:645.69px;font-size:13px;color:#1d2327;font-weight:400;transform:scaleX(0.9963);">simple</div>
<div style="position:absolute;left:766px;top:643px;width:80px;height:32px;background:#ffffff;border:1px solid #8c8f94;border-radius:2px;box-sizing:border-box;"></div>
<div id="t94" class="t" style="left:773.71325648415px;top:652.99px;font-size:13px;color:#2c3338;font-weight:400;transform:scaleX(0.9716);">Publis...</div>
<svg style="position:absolute;left:828px;top:655.5px" width="10" height="8" viewBox="0 0 10 8"><path fill="none" stroke="#1d2327" stroke-width="1.4" d="M1.5 2 L5 5.5 L8.5 2"/></svg>
<div style="position:absolute;left:870px;top:643px;width:80px;height:32px;background:#ffffff;border:1px solid #8c8f94;border-radius:2px;box-sizing:border-box;"></div>
<div id="t95" class="t" style="left:879.096847155586px;top:653.99px;font-size:13px;color:#2c3338;font-weight:400;transform:scaleX(0.9898);">6002</div>
<div style="position:absolute;left:974px;top:643px;width:80px;height:32px;background:#ffffff;border:1px solid #8c8f94;border-radius:2px;box-sizing:border-box;"></div>
<div style="position:absolute;left:1078px;top:643px;width:32px;height:16px;background:#ffffff;border:1px solid #8c8f94;border-radius:8px;box-sizing:border-box;"></div>
<div style="position:absolute;left:1080px;top:645px;width:12px;height:12px;background:#1d2327;border-radius:6px;box-sizing:border-box;"></div>
<div style="position:absolute;left:1217px;top:643px;width:80px;height:32px;background:#ffffff;border:1px solid #8c8f94;border-radius:2px;box-sizing:border-box;"></div>
<div id="t96" class="t" style="left:1223.7816712368306px;top:653.39px;font-size:13px;color:#2c3338;font-weight:400;transform:scaleX(1.0027);">In stock</div>
<svg style="position:absolute;left:1279px;top:655.5px" width="10" height="8" viewBox="0 0 10 8"><path fill="none" stroke="#1d2327" stroke-width="1.4" d="M1.5 2 L5 5.5 L8.5 2"/></svg>
<div id="t97" class="t" style="left:1319.8705960264901px;top:645.59px;font-size:13px;color:#1d2327;font-weight:400;transform:scaleX(1.0329);">28/01/2026,</div>
<div style="position:absolute;left:1406px;top:643px;width:101px;height:36px;background:#0a78c4;border-radius:2px;box-sizing:border-box;"></div>
<div id="t98" class="t" style="left:1418.2185496420789px;top:655.99px;font-size:13px;color:#7ab8ea;font-weight:400;transform:scaleX(0.9390);">Save changes</div>
<div id="t99" class="t" style="left:1417.6312637604578px;top:699.69px;font-size:13px;color:#a7aaad;font-weight:400;transform:scaleX(0.9538);">Reset row</div>
<div style="position:absolute;left:1406px;top:731px;width:87px;height:36px;background:#ffffff;border:1px solid #2271b1;border-radius:2px;box-sizing:border-box;"></div>
<div id="t100" class="t" style="left:1417.5936695936286px;top:743.99px;font-size:13px;color:#2271b1;font-weight:400;transform:scaleX(0.9908);">Edit details</div>
<div style="position:absolute;left:231px;top:775px;width:1287px;height:1px;background:#dcdcde;border-radius:0px;box-sizing:border-box;"></div>
<div style="position:absolute;left:243px;top:787px;width:16px;height:16px;background:#ffffff;border:1px solid #8c8f94;border-radius:3.5px;box-sizing:border-box;"></div>
<div id="t101" class="t" style="left:267.99904043865666px;top:786.49px;font-size:13px;color:#1d2327;font-weight:400;transform:scaleX(0.9862);">2563</div>
<div style="position:absolute;left:324px;top:784px;width:150px;height:32px;background:#ffffff;border:1px solid #8c8f94;border-radius:2px;box-sizing:border-box;"></div>
<div id="t102" class="t" style="left:332.89171094580234px;top:794.99px;font-size:13px;color:#2c3338;font-weight:400;transform:scaleX(0.9982);">Gift card</div>
<div style="position:absolute;left:498px;top:794px;width:13px;height:1.2999999999999545px;background:#1d2327;border-radius:0px;box-sizing:border-box;"></div>
<div id="t103" class="t" style="left:662.3976219196967px;top:786.69px;font-size:13px;color:#1d2327;font-weight:400;transform:scaleX(0.9963);">simple</div>
<div style="position:absolute;left:766px;top:784px;width:80px;height:32px;background:#ffffff;border:1px solid #8c8f94;border-radius:2px;box-sizing:border-box;"></div>
<div id="t104" class="t" style="left:773.71325648415px;top:793.99px;font-size:13px;color:#2c3338;font-weight:400;transform:scaleX(0.9716);">Publis...</div>
<svg style="position:absolute;left:828px;top:796.5px" width="10" height="8" viewBox="0 0 10 8"><path fill="none" stroke="#1d2327" stroke-width="1.4" d="M1.5 2 L5 5.5 L8.5 2"/></svg>
<div style="position:absolute;left:870px;top:784px;width:80px;height:32px;background:#ffffff;border:1px solid #8c8f94;border-radius:2px;box-sizing:border-box;"></div>
<div id="t105" class="t" style="left:879.1040366972478px;top:794.99px;font-size:13px;color:#2c3338;font-weight:400;transform:scaleX(0.9780);">600</div>
<div style="position:absolute;left:974px;top:784px;width:80px;height:32px;background:#ffffff;border:1px solid #8c8f94;border-radius:2px;box-sizing:border-box;"></div>
<div style="position:absolute;left:1078px;top:784px;width:32px;height:16px;background:#2271b1;border-radius:8px;box-sizing:border-box;"></div>
<div style="position:absolute;left:1096px;top:786px;width:12px;height:12px;background:#ffffff;border-radius:6px;box-sizing:border-box;"></div>
<div style="position:absolute;left:1217px;top:784px;width:80px;height:32px;background:#ffffff;border:1px solid #8c8f94;border-radius:2px;box-sizing:border-box;"></div>
<div id="t106" class="t" style="left:1223.7816712368306px;top:794.39px;font-size:13px;color:#2c3338;font-weight:400;transform:scaleX(1.0027);">In stock</div>
<svg style="position:absolute;left:1279px;top:796.5px" width="10" height="8" viewBox="0 0 10 8"><path fill="none" stroke="#1d2327" stroke-width="1.4" d="M1.5 2 L5 5.5 L8.5 2"/></svg>
<div id="t107" class="t" style="left:1319.8705960264901px;top:786.59px;font-size:13px;color:#1d2327;font-weight:400;transform:scaleX(1.0329);">27/01/2026,</div>
<div style="position:absolute;left:1406px;top:784px;width:101px;height:36px;background:#0a78c4;border-radius:2px;box-sizing:border-box;"></div>
<div id="t108" class="t" style="left:1418.2185496420789px;top:796.99px;font-size:13px;color:#7ab8ea;font-weight:400;transform:scaleX(0.9390);">Save changes</div>
<div id="t109" class="t" style="left:1417.6312637604578px;top:840.69px;font-size:13px;color:#a7aaad;font-weight:400;transform:scaleX(0.9538);">Reset row</div>
<div style="position:absolute;left:1406px;top:872px;width:87px;height:36px;background:#ffffff;border:1px solid #2271b1;border-radius:2px;box-sizing:border-box;"></div>
<div id="t110" class="t" style="left:1417.5936695936286px;top:884.99px;font-size:13px;color:#2271b1;font-weight:400;transform:scaleX(0.9908);">Edit details</div>
<div style="position:absolute;left:1078px;top:808px;width:115px;height:32px;background:#ffffff;border:1px solid #8c8f94;border-radius:2px;box-sizing:border-box;"></div>
<div id="t111" class="t" style="left:1087.0825834542816px;top:818.79px;font-size:13px;color:#2c3338;font-weight:400;transform:scaleX(1.0061);">15</div>
<svg style="position:absolute;left:409px;top:333px" width="13" height="20" viewBox="0 0 13 20"><path fill="#fff" stroke="#000" stroke-width="1" d="M1 1 L1 16 L4.5 12.5 L7 18.5 L9.2 17.5 L6.8 11.8 L11.5 11.8 Z"/></svg>
<div style="position:absolute;left:1585px;top:0px;width:15px;height:900px;background:#2b2d2c;border-radius:0px;box-sizing:border-box;"></div>
<svg style="position:absolute;left:1587px;top:4px" width="11" height="9" viewBox="0 0 11 9"><path fill="#a3a3a3" d="M5.5 1 L10 8 H1Z"/></svg>
<div style="position:absolute;left:1588px;top:18px;width:9px;height:214px;background:#a3a3a3;border-radius:5px;box-sizing:border-box;"></div>
<svg style="position:absolute;left:1587px;top:888px" width="11" height="9" viewBox="0 0 11 9"><path fill="#a3a3a3" d="M5.5 8 L10 1 H1Z"/></svg>
</body></html>
